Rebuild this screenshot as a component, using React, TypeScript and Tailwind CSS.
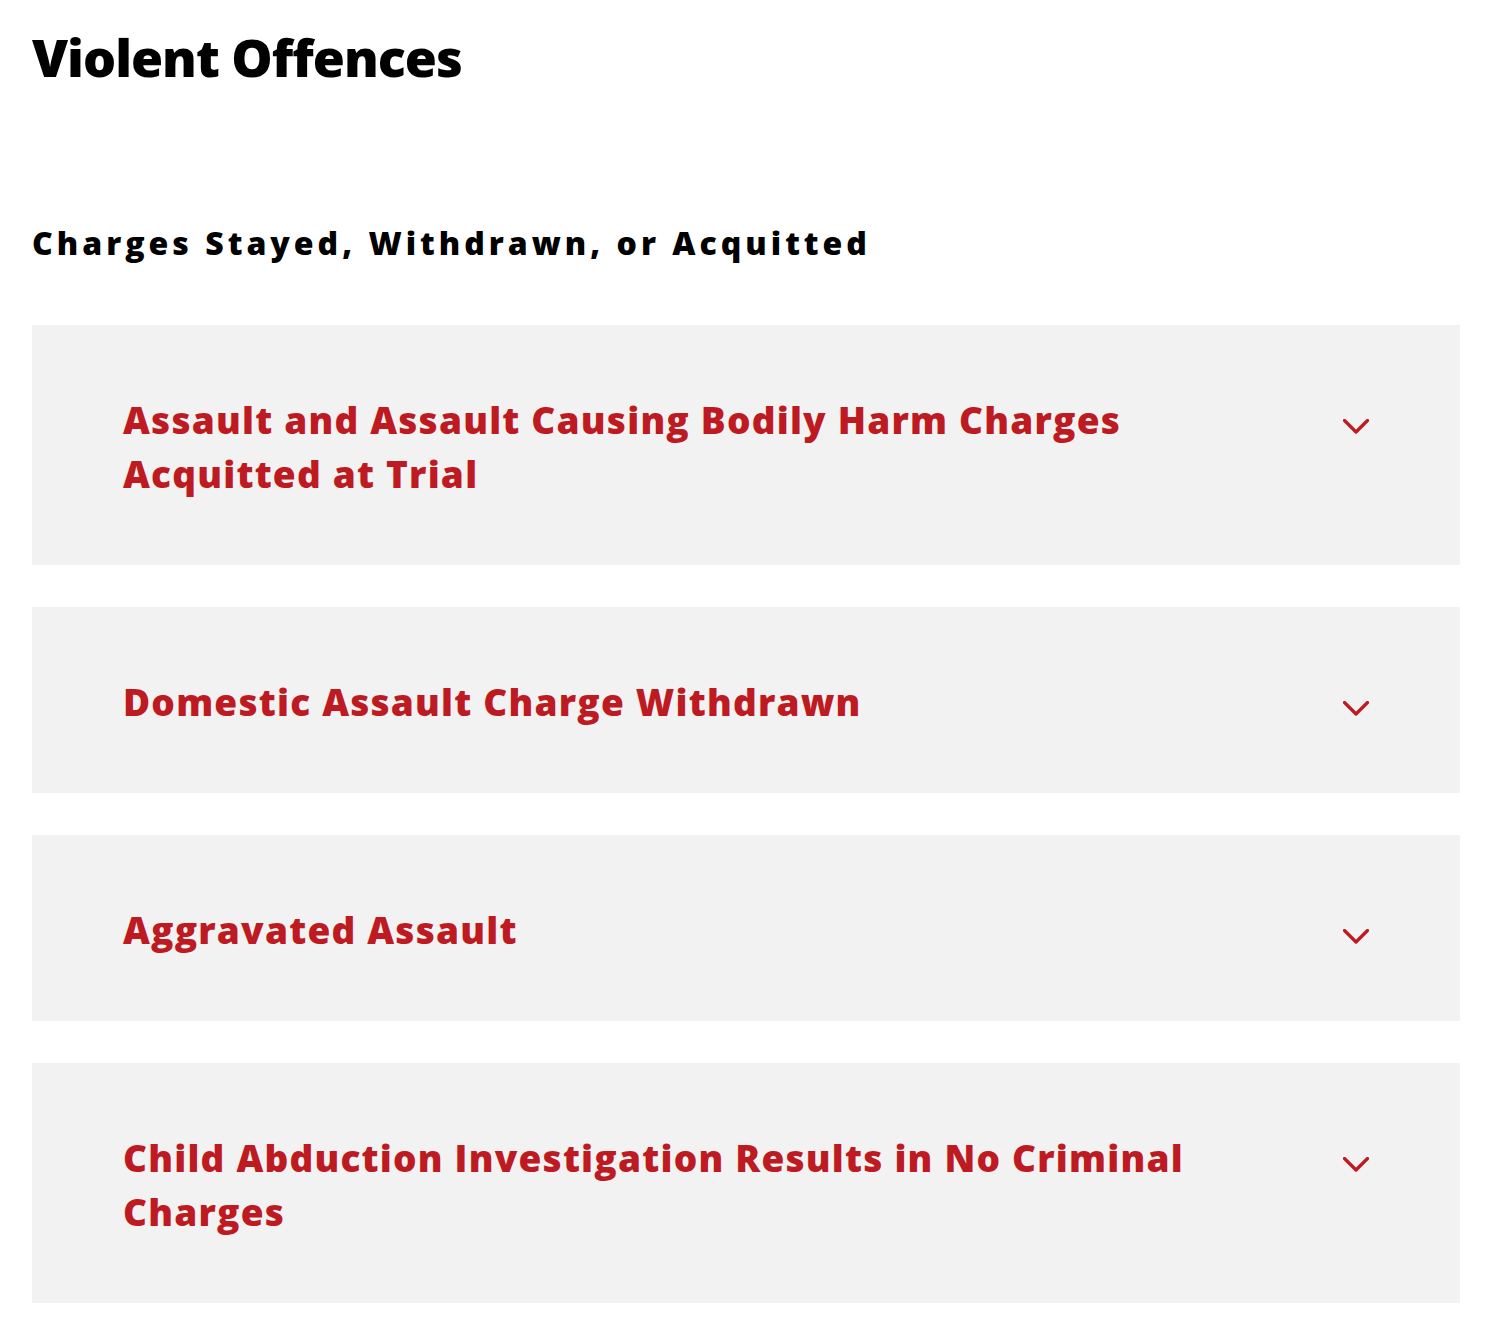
const items = [
  "Assault and Assault Causing Bodily Harm Charges Acquitted at Trial",
  "Domestic Assault Charge Withdrawn",
  "Aggravated Assault",
  "Child Abduction Investigation Results in No Criminal Charges",
];

const Chevron = () => (
  <svg
    width="26"
    height="15"
    viewBox="0 0 26 15"
    fill="none"
    className="mt-[26px] shrink-0 text-[#be1a22]"
  >
    <path
      d="M1.5 1.5 L13 13 L24.5 1.5"
      stroke="currentColor"
      strokeWidth="3.2"
      strokeLinecap="round"
      strokeLinejoin="round"
    />
  </svg>
);

const AccordionItem = ({ title }: { title: string }) => {
  return (
    <div className="flex items-start justify-between bg-[#f2f2f2] pt-[68px] pb-[64px] pl-[91px] pr-[91px]">
      <h3 className="max-w-[1120px] text-[37px] font-extrabold leading-[54px] tracking-[1.2px] text-[#be1a22]">
        {title}
      </h3>
      <Chevron />
    </div>
  );
};

const App = () => {
  return (
    <div className="min-h-screen w-full bg-white px-8 pt-6 font-['Open_Sans',sans-serif] text-black">
      <h1 className="text-[52px] font-extrabold leading-[66px] tracking-[-1px]">
        Violent Offences
      </h1>
      <h2 className="mt-[133px] text-[32px] font-extrabold tracking-[4px] leading-[40px]">
        Charges Stayed, Withdrawn, or Acquitted
      </h2>
      <div className="mt-[62px] flex w-[1428px] flex-col gap-[42px]">
        {items.map(title => (
          <AccordionItem key={title} title={title} />
        ))}
      </div>
    </div>
  );
};

export default App;
